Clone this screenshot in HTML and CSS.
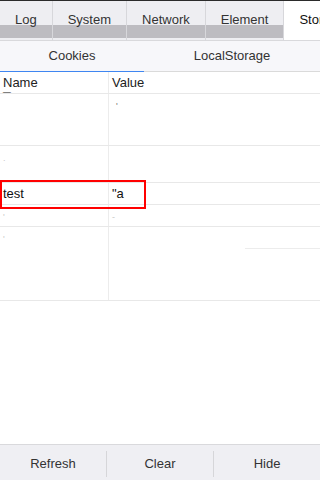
FILE: index.html
```html
<!DOCTYPE html>
<html>
<head>
<meta charset="utf-8">
<link rel="stylesheet" href="styles.css">
</head>
<body>
<div class="app">
  <div class="tabs">
    <div class="tab">Log</div>
    <div class="tab">System</div>
    <div class="tab">Network</div>
    <div class="tab">Element</div>
    <div class="tab active">Storage</div>
  </div>
  <div class="subtabs">
    <div class="subtab sub-cookies active">Cookies</div>
    <div class="subtab sub-local">LocalStorage</div>
  </div>
  <div class="table">
    <div class="row head">
      <div class="cell name">Name</div>
      <div class="cell value">Value</div>
    </div>
    <div class="row r1">
      <div class="cell name"><span class="mark-dash">¯</span></div>
      <div class="cell value"><span class="mark-tick">'</span></div>
    </div>
    <div class="row r2">
      <div class="cell name"><span class="faint">.</span></div>
      <div class="cell value"></div>
    </div>
    <div class="row r3">
      <div class="cell name">test</div>
      <div class="cell value">"a</div>
    </div>
    <div class="row r4">
      <div class="cell name"><span class="faint">'</span></div>
      <div class="cell value"><span class="faint">-</span></div>
    </div>
    <div class="row r5">
      <div class="cell name"><span class="faint">'</span></div>
      <div class="cell value"><div class="partial"></div></div>
    </div>
    <div class="highlight"></div>
  </div>
  <div class="footer">
    <div class="btn">Refresh</div>
    <div class="btn">Clear</div>
    <div class="btn">Hide</div>
  </div>
</div>
</body>
</html>
```
FILE: styles.css
```css
* { box-sizing: border-box; }
html, body { margin: 0; padding: 0; }
body {
  font-family: "Liberation Sans", Arial, sans-serif;
  font-size: 13px;
  color: #222;
  background: #fff;
}
.app {
  height: 100vh;
  display: flex;
  flex-direction: column;
  overflow: hidden;
  border-top: 1px solid #2b2b2b;
}
.tabs {
  display: flex;
  height: 40px;
  flex-shrink: 0;
  overflow: hidden;
  white-space: nowrap;
}
.tab {
  flex-shrink: 0;
  height: 40px;
  padding: 0 15px;
  line-height: 38px;
  color: #333;
  border-right: 1px solid #d7d7db;
  border-bottom: 1px solid #d9d9dc;
  background: linear-gradient(#eeeef2 0, #eeeef2 24px, #bdbcc1 24px, #bdbcc1 37px, #eeeef2 37px);
}
.tab.active {
  background: #fff;
  color: #111;
  border-right: none;
}
.subtabs {
  display: flex;
  height: 31px;
  flex-shrink: 0;
  background: #f7f7fa;
}
.subtab {
  height: 31px;
  line-height: 30px;
  text-align: center;
  color: #333;
  border-bottom: 1px solid #dadada;
}
.sub-cookies { width: 144px; }
.sub-local { flex: 1; }
.subtab.active { border-bottom-color: #3f86f1; }
.table {
  flex: 1;
  position: relative;
}
.row {
  display: flex;
  border-bottom: 1px solid #e8e8e8;
}
.cell {
  padding: 0 3px;
  line-height: 21px;
  color: #111;
}
.cell.name {
  width: 109px;
  border-right: 1px solid #ececec;
}
.cell.value { flex: 1; position: relative; }
.head .cell { color: #222; }
.row.head { height: 22px; }
.row.r1 { height: 52px; }
.row.r2 { height: 37px; }
.row.r3 { height: 22px; }
.row.r4 { height: 22px; }
.row.r5 { height: 74px; }
.mark-dash {
  display: block;
  line-height: 8px;
  font-size: 14px;
  margin-top: 0;
  color: #111;
}
.mark-tick {
  display: block;
  line-height: 12px;
  margin-top: 6px;
  margin-left: 4px;
  color: #777;
  font-size: 9px;
}
.faint {
  color: #c9c9c9;
  font-size: 9px;
}
.partial {
  position: absolute;
  left: 136px;
  right: 0;
  top: 21px;
  border-top: 1px solid #ececec;
}
.highlight {
  position: absolute;
  left: 0;
  top: 108px;
  width: 146px;
  height: 29px;
  border: 2px solid #f00;
  pointer-events: none;
}
.footer {
  flex-shrink: 0;
  height: 36px;
  display: flex;
  align-items: flex-start;
  padding-top: 6px;
  background: #efeff3;
  border-top: 1px solid #d9d9dc;
}
.btn {
  flex: 1;
  height: 26px;
  line-height: 26px;
  text-align: center;
  color: #333;
}
.btn + .btn { border-left: 1px solid #d6d6d9; }
```
